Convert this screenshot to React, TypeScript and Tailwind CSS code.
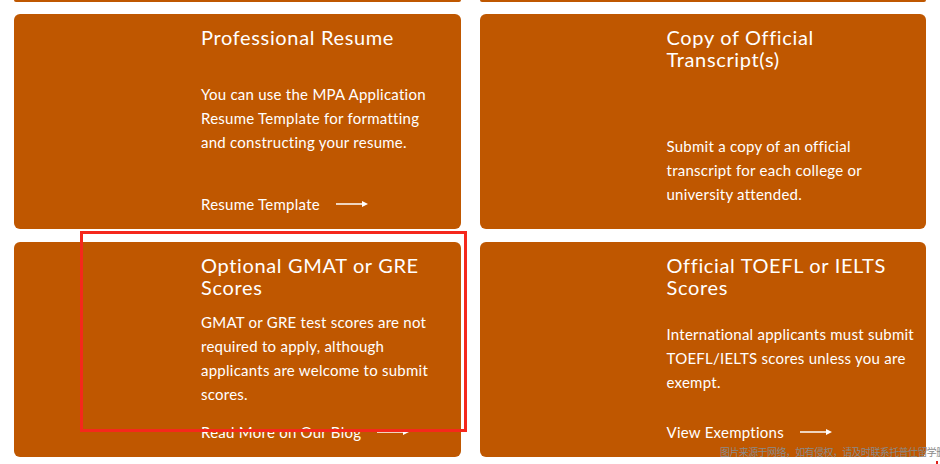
import { Fragment } from 'react'

type CardProps = {
  title: string[]
  body: string[]
  link?: string
  bodyClass: string
}

function Lines({ lines }: { lines: string[] }) {
  return (
    <>
      {lines.map((line, i) => (
        <Fragment key={line}>
          {i > 0 && <br />}
          {line}
        </Fragment>
      ))}
    </>
  )
}

function Arrow() {
  return (
    <svg width="32" height="8" viewBox="0 0 32 8" className="shrink-0">
      <line x1="0" y1="4" x2="27" y2="4" stroke="#ffffff" strokeWidth="1.5" />
      <path d="M26 1 L32 4 L26 7 Z" fill="#ffffff" />
    </svg>
  )
}

function Card({ title, body, link, bodyClass }: CardProps) {
  return (
    <div
      className={`flex h-[215px] flex-col rounded-[6px] bg-[#bf5700] pl-[187px] pr-[4px] pt-[12px] text-white ${
        link ? 'pb-[13px]' : 'pb-[23px]'
      }`}
    >
      <h3 className="whitespace-nowrap text-[20px] font-normal leading-[22px] tracking-[0.65px]">
        <Lines lines={title} />
      </h3>
      <p className={`whitespace-nowrap text-[15px] leading-[24px] tracking-[0.25px] ${bodyClass}`}>
        <Lines lines={body} />
      </p>
      {link && (
        <a className="mt-auto flex items-center gap-[16px] text-[15px] leading-[24px] tracking-[0.25px]">
          <span>{link}</span>
          <Arrow />
        </a>
      )}
    </div>
  )
}

export default function App() {
  return (
    <div className="relative h-[464px] w-[940px] overflow-hidden bg-white font-['Lato','Open_Sans',sans-serif]">
      <div className="flex flex-col px-[14px]">
        <div className="mb-[12px] grid grid-cols-2 gap-x-[19px]">
          <div className="h-[2px] rounded-b-[2px] bg-[#bf5700]" />
          <div className="h-[2px] rounded-b-[2px] bg-[#bf5700]" />
        </div>

        <div className="mb-[13px] grid grid-cols-2 gap-x-[19px]">
          <Card
            title={['Professional Resume']}
            body={['You can use the MPA Application', 'Resume Template for formatting', 'and constructing your resume.']}
            link="Resume Template"
            bodyClass="mt-[34px]"
          />
          <Card
            title={['Copy of Official', 'Transcript(s)']}
            body={['Submit a copy of an official', 'transcript for each college or', 'university attended.']}
            bodyClass="mt-auto"
          />
        </div>

        <div className="grid grid-cols-2 gap-x-[19px]">
          <Card
            title={['Optional GMAT or GRE', 'Scores']}
            body={[
              'GMAT or GRE test scores are not',
              'required to apply, although',
              'applicants are welcome to submit',
              'scores.',
            ]}
            link="Read More on Our Blog"
            bodyClass="mt-[12px]"
          />
          <Card
            title={['Official TOEFL or IELTS', 'Scores']}
            body={['International applicants must submit', 'TOEFL/IELTS scores unless you are', 'exempt.']}
            link="View Exemptions"
            bodyClass="mt-[24px]"
          />
        </div>
      </div>

      {/* annotation box drawn over the screenshot */}
      <div className="pointer-events-none absolute left-[80px] top-[231px] h-[201px] w-[387px] border-[3px] border-[#f5281c]" />

      <div className="pointer-events-none absolute left-[720px] top-[445px] whitespace-nowrap text-[10px] leading-[14px] tracking-[-0.6px] text-[#8a8a8a] font-['Noto_Sans_CJK_SC',sans-serif]">
        图片来源于网络，如有侵权，请及时联系托普仕留学删除
      </div>
      <div className="absolute left-[936px] top-[461px] h-[3px] w-[2px] bg-[#e0201a]" />
    </div>
  )
}
